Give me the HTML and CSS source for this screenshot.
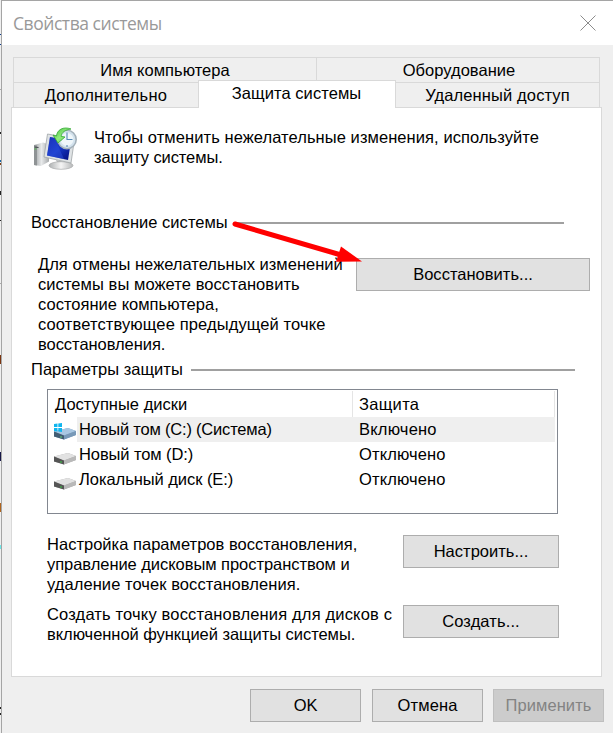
FILE: index.html
```html
<!DOCTYPE html>
<html lang="ru">
<head>
<meta charset="utf-8">
<title>Свойства системы</title>
<link rel="stylesheet" href="styles.css">
</head>
<body>
<svg class="backdrop" width="1" height="733" viewBox="0 0 1 733">
  <path d="M0 0h2v733H0z" fill="#efefef"/>
  <path d="M0 34h2v1H0zM0 44h2v1H0z" fill="#123e8e"/>
  <path d="M0 89h2v1H0zM0 283h2v1H0z" fill="#aaa"/>
  <path d="M0 132h2v2H0zM0 191h2v4H0zM0 220h2v1H0z" fill="#222"/>
  <path d="M0 160h2v2H0z" fill="#1768a8"/>
  <path d="M0 163h2v2H0z" fill="#803c10"/>
  <path d="M0 355h2v9H0z" fill="#7b3510"/>
  <path d="M0 452h2v9H0z" fill="#171747"/>
  <path d="M0 503h2v9H0z" fill="#b0641c"/>
  <path d="M0 545h2v4H0z" fill="#6de8e8"/>
  <path d="M0 707h2v2H0zM0 713h2v2H0z" fill="#222"/>
</svg>
<div class="window">
  <header class="titlebar">
    <h1>Свойства системы</h1>
    <svg class="close" width="16" height="16" viewBox="0 0 16 16"><path d="M.5 .5l15 15M15.500 .5l-15 15" stroke="#8c8c8c" fill="none"/></svg>
  </header>
  <nav class="tabs">
    <div class="tab-row">
      <div class="tab name">Имя компьютера</div>
      <div class="tab hardware">Оборудование</div>
    </div>
    <div class="tab-row">
      <div class="tab advanced s30">Дополнительно</div>
      <div class="tab active s08">Защита системы</div>
      <div class="tab remote s12">Удаленный доступ</div>
    </div>
  </nav>
  <main class="panel">
    <section class="intro">
      <svg class="pc" width="46" height="46" viewBox="0 0 46 46">
        <defs>
          <linearGradient id="screen" x1="0" y1="0" x2="1" y2="1"><stop offset="0" stop-color="#06159a"/><stop offset=".5" stop-color="#1638c8"/><stop offset="1" stop-color="#020b78"/></linearGradient>
          <linearGradient id="tower" x1="0" x2="1"><stop offset="0" stop-color="#999d9f"/><stop offset=".5" stop-color="#e8eaeb"/><stop offset="1" stop-color="#a5a8aa"/></linearGradient>
          <linearGradient id="stand" x1="0" x2="1"><stop offset="0" stop-color="#aeb1b2"/><stop offset=".5" stop-color="#f5f5f5"/><stop offset="1" stop-color="#b6b8b9"/></linearGradient>
          <linearGradient id="arrow" x1="0" x2="1" y2="1"><stop offset="0" stop-color="#42b83b"/><stop offset=".5" stop-color="#92ed7d"/><stop offset="1" stop-color="#45b63e"/></linearGradient>
        </defs>
        <path d="M1 19l9-2.500 6 2v17L8 40l-7-1z" fill="url(#tower)"/>
        <path d="M1 19l3 .5v20L1 39z" fill="#8f9395"/>
        <path d="M1.500 21l4 .5" stroke="#40484a"/><path d="M1.500 23h2" stroke="#4fc04a"/>
        <path d="M23 34l11 3v4H26z" fill="#b4b7b8"/>
        <ellipse cx="28" cy="39.500" rx="12" ry="3.800" fill="url(#stand)" stroke="#a9abac" stroke-width=".7"/>
        <path d="M14.500 8l27 5-3.500 24-27-6z" fill="#dfe3e5" stroke="#a0a5a7" stroke-width=".8"/>
        <path d="M17 11l21 4-3 19-21-4.500z" fill="url(#screen)"/>
        <path d="M17 11l8 1.500c-1 8 3 13 6 20.500l-17-3.500z" fill="#3055df" opacity=".45"/>
        <circle cx="34" cy="13.500" r="9.200" fill="#d3e2ed" stroke="#a4b1ba" stroke-width="1.600"/>
        <circle cx="34" cy="13.500" r="6.500" fill="#eff6fa"/>
        <path d="M34 6.500v7h5.500M34 19v2M27 14h1.500" fill="none" stroke="#5689b6" stroke-width="1.100"/>
        <path d="M38 3C30 0 24 4 23.500 10L20 9l5 8 7-6-4-.7C29 6 32 4 38 3z" fill="url(#arrow)" stroke="#35a936" stroke-width=".8"/>
      </svg>
      <p><span class="s08">Чтобы отменить нежелательные изменения, используйте</span><br><span class="sm10">защиту системы.</span></p>
    </section>

    <h2 class="group restore-title"><span>Восстановление системы</span></h2>
    <section class="restore">
      <p><span>Для отмены нежелательных изменений</span><br><span class="s08">системы вы можете восстановить</span><br><span>состояние компьютера,</span><br><span class="s12">соответствующее предыдущей точке</span><br><span class="sm05">восстановления.</span></p>
      <button class="wide">Восстановить...</button>
    </section>

    <h2 class="group settings-title"><span>Параметры защиты</span></h2>
    <section class="drives">
      <div class="drive-head"><span>Доступные диски</span><span class="status s30">Защита</span></div>
      <div class="drive selected">
        <svg width="26" height="25" viewBox="0 0 26 25">
          <path d="M3 14.500L17 11l8 3v4l-12 4.500-10-3z" fill="#7fa2c2"/><path d="M3 14.500L17 11l8 3-12 4.500z" fill="#a9c7e2"/><path d="M3 14.500l10 4v4l-10-3z" fill="#425d73"/><path d="M13 18.500L25 14v4l-12 4.500z" fill="#7899b8"/><path d="M9 19.500h2v1H9z" fill="#65d36e"/>
          <path d="M3 7l3.500-.5V10H3zM7.300 6.400L11 6v4H7.300zM3 10.900h3.500v3.500L3 14zM7.300 10.900H11V15l-3.700-.5z" fill="#10b5ee"/>
        </svg>
        <span class="label sm20">Новый том (C:) (Система)</span><span class="status s20">Включено</span>
      </div>
      <div class="drive">
        <svg width="26" height="25" viewBox="0 0 26 25"><path d="M3 14.500L17 11l8 3v4l-12 4.500-10-3z" fill="#aaa"/><path d="M3 14.500L17 11l8 3-12 4.500z" fill="#e2e2e2"/><path d="M3 14.500l10 4v4l-10-3z" fill="#555"/><path d="M13 18.500L25 14v4l-12 4.500z" fill="#b9b9b9"/><path d="M9 19.500h2v1H9z" fill="#37c942"/></svg>
        <span class="label sm10">Новый том (D:)</span><span class="status s12">Отключено</span>
      </div>
      <div class="drive">
        <svg width="26" height="25" viewBox="0 0 26 25"><path d="M3 14.500L17 11l8 3v4l-12 4.500-10-3z" fill="#aaa"/><path d="M3 14.500L17 11l8 3-12 4.500z" fill="#e2e2e2"/><path d="M3 14.500l10 4v4l-10-3z" fill="#555"/><path d="M13 18.500L25 14v4l-12 4.500z" fill="#b9b9b9"/><path d="M9 19.500h2v1H9z" fill="#37c942"/></svg>
        <span class="label sm05">Локальный диск (E:)</span><span class="status s12">Отключено</span>
      </div>
    </section>

    <section class="action configure">
      <p><span>Настройка параметров восстановления,</span><br><span class="sm05">управление дисковым пространством и</span><br><span class="s08">удаление точек восстановления.</span></p>
      <button>Настроить...</button>
    </section>
    <section class="action create">
      <p><span class="s16">Создать точку восстановления для дисков с</span><br><span class="sm05">включенной функцией защиты системы.</span></p>
      <button class="s12">Создать...</button>
    </section>
  </main>
  <footer class="footer">
    <button class="sm20">OK</button>
    <button class="s12">Отмена</button>
    <button class="s08" disabled>Применить</button>
  </footer>
</div>
<svg class="pointer" width="132" height="46" viewBox="0 0 132 46"><path d="M5 5l106 31" stroke="red" stroke-width="5" stroke-linecap="round"/><path d="M111 27.500L132 42.500l-26 .3z" fill="red"/></svg>
</body>
</html>
```
FILE: styles.css
```css
* { box-sizing: border-box; }
body {
  margin: 0;
  width: 613px;
  height: 733px;
  overflow: hidden;
  display: flex;
  font: 16.5px/20px "Liberation Sans", Arial, sans-serif;
  letter-spacing: .02px;
  color: #000;
  background: #efefef;
}
h1, h2, p { margin: 0; font-weight: normal; font-size: inherit; }
svg { display: block; flex: none; }
.window {
  flex: 1;
  height: 733px;
  border-top: 1px solid #a5a5a5;
  border-left: 1px solid #a5a5a5;
  background: #efefef;
}
.titlebar {
  height: 44px;
  padding: 0 17px 0 11px;
  display: flex;
  align-items: center;
  justify-content: space-between;
  background: #fff;
}
.titlebar h1 {
  font: 17.5px/24px "Open Sans", "Noto Sans", sans-serif;
  letter-spacing: -.45px;
  color: #999;
}

/* Tabs */
.tabs { margin: 12px 0 0 11px; width: 587px; }
.tab-row { display: flex; height: 25px; }
.tab {
  border: 1px solid #d9d9d9;
  border-width: 1px 0 0 1px;
  line-height: 24px;
  text-align: center;
  white-space: nowrap;
}
.name { width: 303px; }
.hardware { width: 284px; border-right-width: 1px; padding-left: 2px; }
.advanced { width: 185px; }
.active {
  position: relative;
  width: 198px;
  height: 28px;
  margin-top: -2px;
  padding-right: 1px;
  border-right-width: 1px;
  background: #fff;
}
.remote { width: 204px; border-width: 1px 1px 0 0; }

/* Tab page */
.panel {
  width: 591px;
  height: 570px;
  margin-left: 9px;
  border: 1px solid #d9d9d9;
  background: #fff;
}
.intro { display: flex; height: 105px; padding: 18px 0 0 21px; }
.intro p { margin: 1px 0 0 15px; }
.group { display: flex; align-items: center; height: 20px; margin-left: 19px; }
.group span { padding-bottom: 2px; }
.group::after { content: ""; height: 2px; background: #a0a0a0; flex: 1; }
.restore-title { width: 533px; }
.restore-title::after { margin-left: 7px; }
.settings-title { width: 544px; }
.settings-title::after { margin-left: 8px; }
.restore { display: flex; height: 127px; padding: 21px 0 0 26px; }
.restore p { width: 318px; white-space: nowrap; }
button {
  width: 156px;
  height: 33px;
  padding: 0 0 2px;
  border: 1px solid #adadad;
  border-radius: 0;
  background: #e1e1e1;
  color: #000;
  font: inherit;
  letter-spacing: .02px;
}
.wide { width: 234px; margin-top: 4px; }

/* Drive list */
.drives {
  width: 511px;
  height: 125px;
  margin: 9px 0 0 35px;
  padding: 1px 2px 0 0;
  border: 1px solid #828790;
}
.drive-head { display: flex; height: 26px; border-right: 1px solid #e5e5e5; line-height: 27px; }
.drive-head > span:first-child { width: 305px; padding-left: 7px; border-right: 1px solid #e5e5e5; }
.drive { display: flex; height: 25px; line-height: 25px; margin-left: 3px; }
.label { width: 276px; padding-left: 2px; }
.status { flex: 1; padding-left: 6px; }
.selected .label, .selected .status { background: #efefef; }

.action { display: flex; padding-left: 35px; }
.action p { width: 356px; margin-top: -1px; white-space: nowrap; }
.configure { margin-top: 21px; height: 70px; }

/* Dialog buttons */
.footer { display: flex; gap: 11px; margin: 12px 0 0 248px; }
.footer button { width: 111px; }
button:disabled { margin-left: -1px; border-color: #bfbfbf; background: #ccc; color: #838383; }

.pointer { position: absolute; left: 230px; top: 219px; }

/* Letter spacing steps */
.sm20 { letter-spacing: -.2px; }
.sm10 { letter-spacing: -.1px; }
.sm05 { letter-spacing: -.05px; }
.s08 { letter-spacing: .07px; }
.s12 { letter-spacing: .12px; }
.s16 { letter-spacing: .16px; }
.s20 { letter-spacing: .2px; }
.s30 { letter-spacing: .3px; }
```
